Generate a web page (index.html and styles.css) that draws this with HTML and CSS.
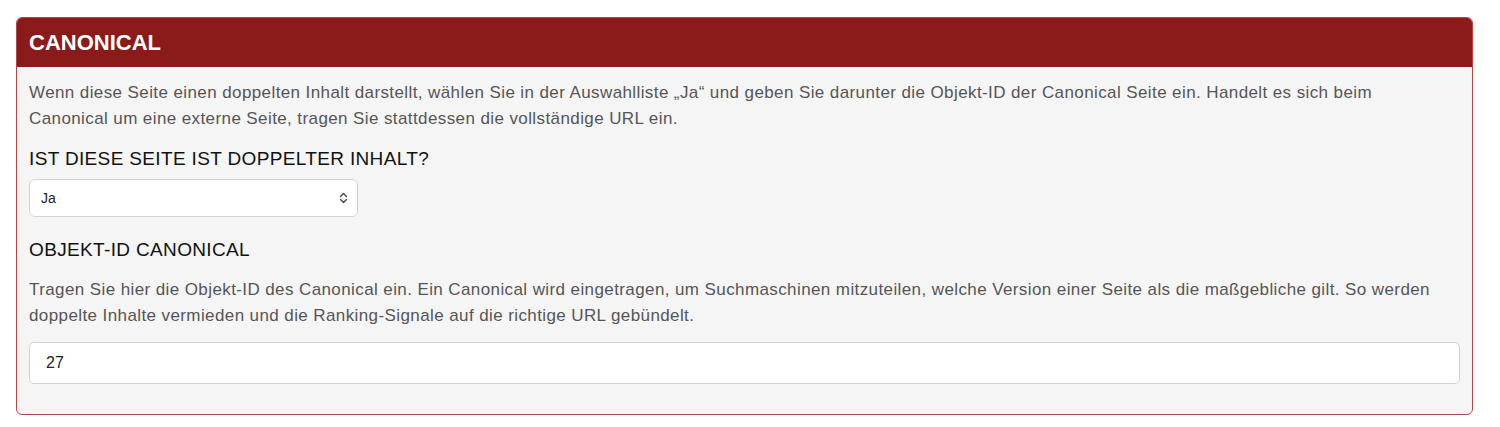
FILE: index.html
```html
<!DOCTYPE html>
<html lang="de">
<head>
<meta charset="utf-8">
<title>Canonical</title>
<link rel="stylesheet" href="styles.css">
</head>
<body>
<section class="panel">
  <header class="panel-head">CANONICAL</header>
  <div class="panel-body">
    <p class="help">Wenn diese Seite einen doppelten Inhalt darstellt, wählen Sie in der Auswahlliste „Ja“ und geben Sie darunter die Objekt-ID der Canonical Seite ein. Handelt es sich beim Canonical um eine externe Seite, tragen Sie stattdessen die vollständige URL ein.</p>
    <label class="field-label">IST DIESE SEITE IST DOPPELTER INHALT?</label>
    <div class="select">
      <span>Ja</span>
      <svg class="chev" width="9" height="12" viewBox="0 0 9 12"><path d="M1.5 4.5 L4.5 1.5 L7.5 4.5 M1.5 7.5 L4.5 10.5 L7.5 7.5" fill="none" stroke="#444" stroke-width="1.4" stroke-linecap="round" stroke-linejoin="round"/></svg>
    </div>
    <label class="field-label second">OBJEKT-ID CANONICAL</label>
    <p class="help tight">Tragen Sie hier die Objekt-ID des Canonical ein. Ein Canonical wird eingetragen, um Suchmaschinen mitzuteilen, welche Version einer Seite als die maßgebliche gilt. So werden doppelte Inhalte vermieden und die Ranking-Signale auf die richtige URL gebündelt.</p>
    <div class="input">27</div>
  </div>
</section>
</body>
</html>
```
FILE: styles.css
```css
* { box-sizing: border-box; }
body {
  margin: 0;
  padding: 17px 27px 0 16px;
  background: #fff;
  font-family: "Liberation Sans", Arial, Helvetica, sans-serif;
}
.panel {
  border: 1px solid #b5474a;
  border-radius: 6px;
  overflow: hidden;
  background: #f5f5f5;
}
.panel-head {
  background: #8b1a1a;
  color: #fff;
  font-weight: bold;
  font-size: 22px;
  height: 49px;
  display: flex;
  align-items: center;
  padding: 0 12px;
}
.panel-body {
  display: flex;
  flex-direction: column;
  padding: 13px 12px 30px 12px;
}
.help {
  margin: 0;
  padding-right: 25px;
  color: #555;
  font-size: 17px;
  letter-spacing: 0.4px;
  line-height: 26px;
}
.field-label {
  margin-top: 16px;
  font-size: 19px;
  letter-spacing: 0.35px;
  line-height: 22px;
  color: #111;
}
.field-label.second { margin-top: 22px; }
.help.tight { margin-top: 16px; }
.select {
  margin-top: 9px;
  width: 329px;
  height: 38px;
  background: #fff;
  border: 1px solid #d2d2d2;
  border-radius: 6px;
  display: flex;
  align-items: center;
  justify-content: space-between;
  padding: 0 9px 0 11px;
  font-size: 14px;
  color: #222;
}
.chev { display: block; }
.input {
  margin-top: 13px;
  height: 42px;
  background: #fff;
  border: 1px solid #d2d2d2;
  border-radius: 5px;
  display: flex;
  align-items: center;
  padding: 0 16px;
  font-size: 16px;
  color: #222;
}
```
